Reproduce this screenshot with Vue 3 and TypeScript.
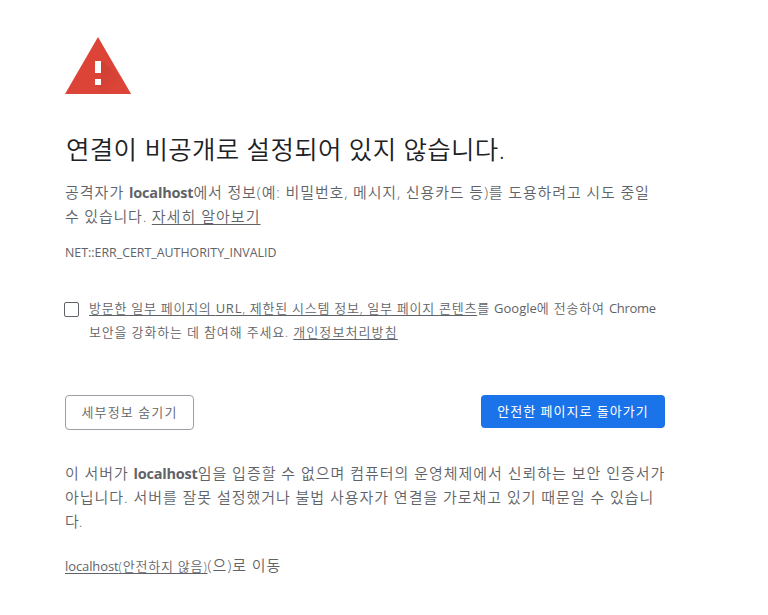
<script setup lang="ts">
import { ref } from 'vue'

const reporting = ref(false)
const errorCode = 'NET::ERR_CERT_AUTHORITY_INVALID'
</script>

<template>
  <main class="page">
    <svg class="warning" width="66" height="57" viewBox="0 0 66 57" aria-hidden="true">
      <defs>
        <linearGradient id="shade" x1="30" y1="24" x2="52" y2="46" gradientUnits="userSpaceOnUse">
          <stop offset="0" stop-color="#c23a2e" />
          <stop offset="1" stop-color="#db4437" />
        </linearGradient>
      </defs>
      <path d="M33 0 66 57H0Z" fill="#db4437" />
      <path d="M36 24 55.5 39 66 57H39L30 48 36 42Z" fill="url(#shade)" opacity=".65" />
      <path d="M30 24h6v12h-6zM30 42h6v6h-6z" fill="#fff" />
    </svg>

    <h1>연결이 비공개로 설정되어 있지 않습니다.</h1>

    <p class="message">
      <span class="line"><span class="a1">공격자가 </span><strong>localhost</strong><span class="a2">에서 정보(예: 비밀번호, 메시지, 신용카드 등)를 도용하려고 시도 중일</span></span>
      <span class="line"><span class="a3">수 있습니다. </span><a class="a4">자세히 알아보기</a></span>
    </p>

    <div class="code">{{ errorCode }}</div>

    <div class="report">
      <button class="check" role="checkbox" :aria-checked="reporting" @click="reporting = !reporting"></button>
      <p>
        <span class="line"><a class="b1">방문한 일부 페이지의 <span class="latin">URL</span>, 제한된 시스템 정보, 일부 페이지 콘텐츠</a><span class="b2">를 <span class="latin google">Google</span>에 전송하여 <span class="latin chrome">Chrome</span></span></span>
        <span class="line"><span class="b3">보안을 강화하는 데 참여해 주세요. </span><a class="b4">개인정보처리방침</a></span>
      </p>
    </div>

    <div class="actions">
      <button class="secondary">세부정보 숨기기</button>
      <button class="primary">안전한 페이지로 돌아가기</button>
    </div>

    <p class="details">
      <span class="line"><span class="c1">이 서버가 </span><strong>localhost</strong><span class="c2">임을 입증할 수 없으며 컴퓨터의 운영체제에서 신뢰하는 보안 인증서가</span></span>
      <span class="line c3">아닙니다. 서버를 잘못 설정했거나 불법 사용자가 연결을 가로채고 있기 때문일 수 있습니</span>
      <span class="line">다.</span>
    </p>

    <p class="proceed line"><a class="d1"><span class="latin host">localhost</span><span class="d3">(안전하지 않음)</span></a><span class="d2">(으)로 이동</span></p>
  </main>
</template>

<style>
body {
  margin: 0;
  background: #fff;
}
</style>

<style scoped>
.page {
  box-sizing: border-box;
  width: 665px;
  padding: 37px 0 0 65px;
  color: #5f6368;
  font-family: "Open Sans", "Noto Sans CJK KR", sans-serif;
  font-size: 15px;
  font-weight: 350;
  line-height: 24px;
  white-space: nowrap;
}
.warning {
  display: block;
}
h1 {
  height: 32px;
  margin: 39px 0 0 1px;
  color: #202124;
  font-size: 25.5px;
  font-weight: 350;
  letter-spacing: 0.35px;
  line-height: 33px;
}
p {
  margin: 0;
}
.line {
  display: block;
  height: 24px;
  white-space: pre;
}
a {
  text-decoration: underline;
  text-decoration-thickness: 1px;
  text-underline-offset: 2px;
  cursor: pointer;
}
strong {
  font-weight: 700;
  font-size: 14.5px;
  letter-spacing: -0.2px;
}
.latin {
  font-weight: 400;
}
.a1 { letter-spacing: 1px; }
.a2 { letter-spacing: 0.86px; }
.a3 { letter-spacing: 0.8px; }
.a4 { letter-spacing: 1.03px; }
.b1 { letter-spacing: 0.74px; }
.b2 { letter-spacing: 0.8px; }
.b3 { letter-spacing: 0.84px; }
.b4 { letter-spacing: 1.1px; }
.c1 { letter-spacing: 0.9px; }
.c2 { letter-spacing: 0.98px; }
.c3 { letter-spacing: 0.96px; }
.d2 { letter-spacing: 0.9px; }
.d3 { letter-spacing: 0.75px; }
.google { letter-spacing: 0; }
.chrome { letter-spacing: -0.3px; }
.host { letter-spacing: -0.1px; }
.message {
  margin-top: 15px;
}
.code {
  height: 24px;
  margin-top: 12px;
  font-size: 12.4px;
  font-weight: 400;
  line-height: 25px;
}
.report {
  display: flex;
  margin-top: 32px;
  font-size: 13px;
}
.check {
  box-sizing: border-box;
  width: 15px;
  height: 15px;
  margin: 6px 10px 0 -1px;
  padding: 0;
  border: 1px solid #5f6368;
  border-radius: 2px;
  background: #fff;
}
.actions {
  display: flex;
  justify-content: space-between;
  align-items: flex-start;
  margin-top: 51px;
}
.actions button {
  box-sizing: border-box;
  padding: 0 0 1px;
  border-radius: 4px;
  font: inherit;
  font-size: 13px;
  text-align: center;
}
.actions .secondary {
  width: 129px;
  height: 35px;
  border: 1px solid #9aa0a6;
  background: #fff;
  color: #5f6368;
  letter-spacing: 1.1px;
}
.actions .primary {
  width: 184px;
  height: 33px;
  border: 0;
  background: #1a73e8;
  color: #fff;
  font-weight: 400;
  letter-spacing: 1px;
}
.details {
  margin-top: 31px;
}
.proceed {
  margin-top: 20px;
}
.d1 {
  font-size: 13px;
}
</style>
